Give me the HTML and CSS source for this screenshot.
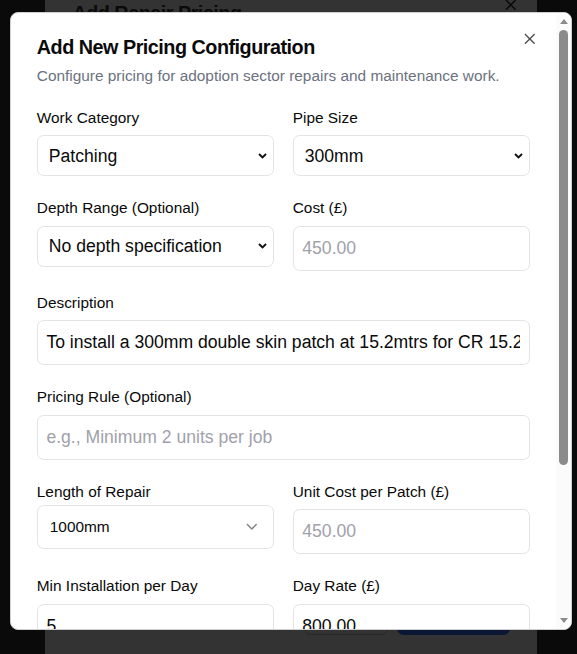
FILE: index.html
```html
<!DOCTYPE html>
<html lang="en">
<head>
<meta charset="utf-8">
<title>Add New Pricing Configuration</title>
<link rel="stylesheet" href="styles.css">
</head>
<body>
<div class="page">
  <div class="back-dialog" aria-hidden="true">
    <div class="back-header">
      <h2 class="back-title">Add Repair Pricing</h2>
      <span class="back-close">
        <svg viewBox="0 0 24 24" width="17.6" height="17.6" fill="none" stroke="currentColor" stroke-width="2" stroke-linecap="round" stroke-linejoin="round"><path d="M18 6 6 18"/><path d="m6 6 12 12"/></svg>
      </span>
    </div>
    <div class="back-footer">
      <span class="back-btn back-btn-outline"></span>
      <span class="back-btn back-btn-primary"></span>
    </div>
  </div>

  <div class="modal" role="dialog" aria-labelledby="dlg-title">
    <div class="modal-content">
      <button class="close" type="button" aria-label="Close">
        <svg viewBox="0 0 24 24" width="17.6" height="17.6" fill="none" stroke="currentColor" stroke-width="2" stroke-linecap="round" stroke-linejoin="round"><path d="M18 6 6 18"/><path d="m6 6 12 12"/></svg>
      </button>
      <header class="modal-header">
        <h2 class="modal-title" id="dlg-title">Add New Pricing Configuration</h2>
        <p class="modal-desc">Configure pricing for adoption sector repairs and maintenance work.</p>
      </header>

      <form class="form">
        <div class="row">
          <div class="field">
            <label class="label" for="cat">Work Category</label>
            <select class="native-select" id="cat"><option>Patching</option></select>
          </div>
          <div class="field">
            <label class="label" for="pipe">Pipe Size</label>
            <select class="native-select" id="pipe"><option>300mm</option></select>
          </div>
        </div>

        <div class="row">
          <div class="field">
            <label class="label" for="depth">Depth Range (Optional)</label>
            <select class="native-select" id="depth"><option>No depth specification</option></select>
          </div>
          <div class="field">
            <label class="label" for="cost">Cost (£)</label>
            <input class="input" id="cost" type="text" placeholder="450.00">
          </div>
        </div>

        <div class="field">
          <label class="label" for="desc">Description</label>
          <input class="input" id="desc" type="text" value="To install a 300mm double skin patch at 15.2mtrs for CR 15.2mtrs">
        </div>

        <div class="field">
          <label class="label" for="rule">Pricing Rule (Optional)</label>
          <input class="input" id="rule" type="text" placeholder="e.g., Minimum 2 units per job">
        </div>

        <div class="row">
          <div class="field field-compact">
            <label class="label" for="len">Length of Repair</label>
            <button class="ui-select" id="len" type="button">
              <span>1000mm</span>
              <svg class="chev" viewBox="0 0 24 24" width="17.6" height="17.6" fill="none" stroke="currentColor" stroke-width="2" stroke-linecap="round" stroke-linejoin="round"><path d="m6 9 6 6 6-6"/></svg>
            </button>
          </div>
          <div class="field">
            <label class="label" for="unit">Unit Cost per Patch (£)</label>
            <input class="input" id="unit" type="text" placeholder="450.00">
          </div>
        </div>

        <div class="row">
          <div class="field">
            <label class="label" for="min">Min Installation per Day</label>
            <input class="input" id="min" type="text" value="5">
          </div>
          <div class="field">
            <label class="label" for="day">Day Rate (£)</label>
            <input class="input" id="day" type="text" value="800.00">
          </div>
        </div>
      </form>
    </div>

    <div class="scrollbar" aria-hidden="true">
      <span class="sb-btn sb-up"></span>
      <span class="sb-track"><span class="sb-thumb"></span></span>
      <span class="sb-btn sb-down"></span>
    </div>
  </div>
</div>
</body>
</html>
```

FILE: styles.css
```css
* {
  box-sizing: border-box;
}

html,
body {
  margin: 0;
  padding: 0;
}

body {
  background: #0a0a0a;
  font-family: "Liberation Sans", Arial, sans-serif;
  color: #0a0a0a;
  overflow: hidden;
}

.page {
  position: relative;
  width: 577px;
  height: 654px;
  overflow: hidden;
}

/* dimmed dialog behind */
.back-dialog {
  position: absolute;
  left: 45px;
  top: -22px;
  width: 492px;
  height: 683px;
  background: #333333;
  display: flex;
  flex-direction: column;
  justify-content: space-between;
  padding: 25px 27.4px 26.4px 27.4px;
}

.back-header {
  position: relative;
}

.back-title {
  margin: 0;
  font-size: 19.8px;
  line-height: 20px;
  font-weight: 700;
  letter-spacing: -0.495px;
  color: #0a0a0a;
}

.back-close {
  position: absolute;
  top: -7.4px;
  right: -9.8px;
  width: 17.6px;
  height: 17.6px;
  color: #0a0a0a;
  display: block;
}

.back-close svg {
  display: block;
}

.back-footer {
  display: flex;
  justify-content: flex-end;
  gap: 8.8px;
}

.back-btn {
  display: block;
  height: 44px;
  border-radius: 6.6px;
}

.back-btn-outline {
  width: 84px;
  border: 1px solid #282828;
  background: #333333;
}

.back-btn-primary {
  width: 113px;
  background: #0a1633;
}

/* front dialog */
.modal {
  position: absolute;
  left: 10px;
  top: 12px;
  width: 562px;
  height: 618px;
  background: #ffffff;
  border: 1px solid #cfcfcf;
  border-radius: 8px;
  display: flex;
  overflow: hidden;
}

.modal-content {
  position: relative;
  flex: 1;
  min-width: 0;
  padding: 24px 26.4px 0 25.8px;
  overflow: hidden;
}

.close {
  position: absolute;
  top: 17px;
  right: 17.6px;
  width: 17.6px;
  height: 17.6px;
  padding: 0;
  border: 0;
  background: none;
  color: #0a0a0a;
  opacity: 0.7;
  cursor: pointer;
}

.close svg {
  display: block;
}

.modal-title {
  margin: 0;
  font-size: 19.8px;
  line-height: 20px;
  font-weight: 700;
  letter-spacing: -0.495px;
  color: #0a0a0a;
}

.modal-desc {
  margin: 7.5px 0 0;
  font-size: 15.4px;
  line-height: 22px;
  color: #6b7280;
}

.form {
  margin-top: 20.4px;
  display: flex;
  flex-direction: column;
  gap: 20.85px;
}

.row {
  display: grid;
  grid-template-columns: 1fr 1fr;
  column-gap: 19px;
  align-items: start;
}

.field {
  display: flex;
  flex-direction: column;
  min-width: 0;
}

.label {
  display: block;
  font-size: 15.4px;
  line-height: 22px;
  color: #0a0a0a;
  margin-bottom: 6.6px;
}

.field-compact .label {
  margin-bottom: 2.4px;
}

.native-select {
  -webkit-appearance: none;
  appearance: none;
  width: 100%;
  height: 41px;
  margin: 0;
  padding: 0 24px 0 11px;
  border: 1px solid #e3e3e3;
  border-radius: 6.6px;
  background-color: #ffffff;
  background-image: url("data:image/svg+xml,%3Csvg xmlns='http://www.w3.org/2000/svg' width='9' height='6' viewBox='0 0 9 6'%3E%3Cpath d='M1 1l3.5 3.5L8 1' fill='none' stroke='%23111' stroke-width='1.9'/%3E%3C/svg%3E");
  background-repeat: no-repeat;
  background-position: right 5.5px center;
  font-family: "Liberation Sans", Arial, sans-serif;
  font-size: 17.6px;
  color: #0a0a0a;
}

.input {
  width: 100%;
  height: 45px;
  margin: 0;
  padding: 0 8.6px;
  border: 1px solid #e3e3e3;
  border-radius: 6.6px;
  background: #ffffff;
  font-family: "Liberation Sans", Arial, sans-serif;
  font-size: 17.6px;
  color: #0a0a0a;
  outline: none;
}

.input::placeholder {
  color: #a1a1aa;
}

.ui-select {
  width: 100%;
  height: 44px;
  margin: 0;
  padding: 0 12px;
  border: 1px solid #e3e3e3;
  border-radius: 6.6px;
  background: #ffffff;
  display: flex;
  align-items: center;
  justify-content: space-between;
  font-family: "Liberation Sans", Arial, sans-serif;
  font-size: 15.4px;
  color: #0a0a0a;
  text-align: left;
}

.chev {
  display: block;
  flex: none;
  opacity: 0.5;
}

/* scrollbar */
.scrollbar {
  width: 15px;
  flex: none;
  display: flex;
  flex-direction: column;
  align-items: center;
  background: #fbfbfb;
}

.sb-btn {
  width: 15px;
  height: 15px;
  flex: none;
  display: flex;
  align-items: center;
  justify-content: center;
}

.sb-up::before,
.sb-down::before {
  content: "";
  width: 0;
  height: 0;
  border-left: 4px solid transparent;
  border-right: 4px solid transparent;
}

.sb-up::before {
  border-bottom: 5px solid #8b8b8b;
  margin-top: 1px;
}

.sb-down::before {
  border-top: 5px solid #8b8b8b;
  margin-top: -2px;
}

.sb-track {
  flex: 1;
  display: flex;
  justify-content: center;
  padding-top: 2px;
}

.sb-thumb {
  display: block;
  width: 9px;
  height: 435px;
  border-radius: 4.5px;
  background: #8b8b8b;
}
```
